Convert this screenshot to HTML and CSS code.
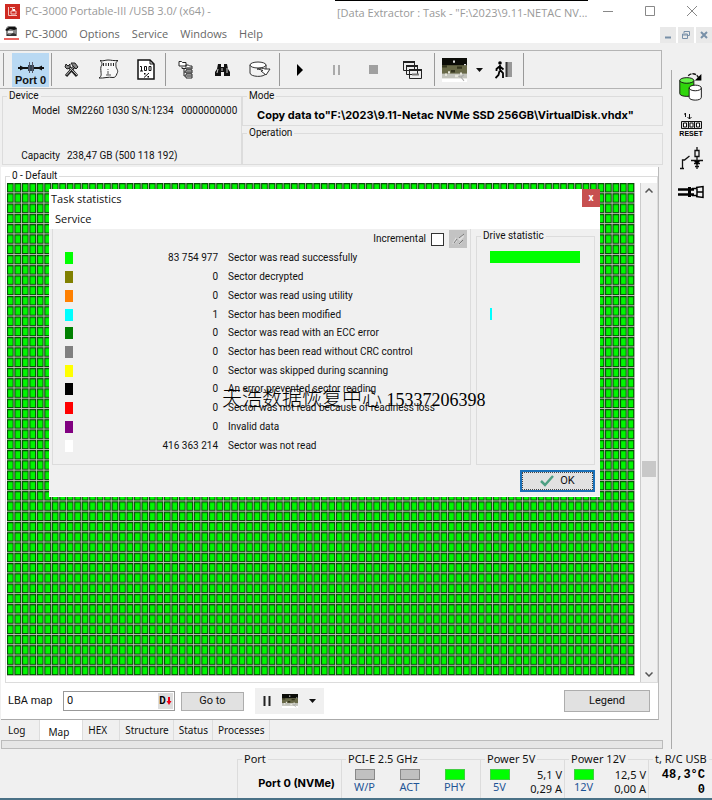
FILE: index.html
```html
<!DOCTYPE html>
<html lang="en">
<head>
<meta charset="utf-8">
<title>PC-3000 Portable-III</title>
<link rel="stylesheet" href="styles.css">
</head>
<body>
<svg class="defs" aria-hidden="true">
  <defs>
    <symbol id="photo" viewBox="0 0 25 20" preserveAspectRatio="none">
      <rect width="25" height="20" fill="#fff"/>
      <rect width="25" height="7" fill="#0b0c08"/>
      <rect y="6" width="25" height="8" fill="#686948"/>
      <rect y="13" width="25" height="4" fill="#c3c4bc"/>
      <path d="M0 6h5v2H0zM15 7h5v2h-5zM9 10h4v2H9z" fill="#35361f"/>
      <path d="M3 13h2v2H3zM6 11h2v2H6zM13 14h4v2h-4zM18 12h2v2h-2z" fill="#e6e6dc"/>
      <path d="M11 2h2v2h-2zM22 5h2v1h-2z" fill="#ddd"/>
      <path d="M16 15l3 1 3-2M19 16l3 3" stroke="#aaa" fill="none"/>
    </symbol>
  </defs>
</svg>

<header class="titlebar">
  <svg class="app-logo" viewBox="0 0 15 15" aria-hidden="true"><rect width="15" height="15" fill="#cf2a22"/><path d="M5 3.500h5M3.500 3v8.500H12M6 7h5v3H6zM7.500 4v3" stroke="#f6c5c0" fill="none"/><path d="M8 5h2v2H8z" fill="#fff"/></svg>
  <span class="title-main">PC-3000 Portable-III /USB 3.0/ (x64) -</span>
  <span class="title-task">[Data Extractor : Task - "F:\2023\9.11-NETAC NV...</span>
  <div class="win-buttons">
    <button aria-label="Minimize"><svg viewBox="0 0 10 10"><path d="M0 5.500h10"/></svg></button>
    <button aria-label="Maximize"><svg viewBox="0 0 10 10"><path d="M.5.5h9v9h-9z"/></svg></button>
    <button aria-label="Close"><svg viewBox="0 0 10 10"><path d="M0 0l10 10M10 0L0 10"/></svg></button>
  </div>
</header>

<nav class="menubar">
  <svg class="menu-logo" viewBox="0 0 15 14" aria-hidden="true"><path d="M2 2l2-2h7l2 2v8H2z" fill="#888"/><path d="M1 4l4-3h6l2 2-3 1-4-1-3 2z" fill="#111"/><path d="M3 8l3 1 3-2 3 1v2H3z" fill="#333"/><path d="M4 5h5v2H4z" fill="#eee"/><path d="M0 13h15" stroke="#e2302a" stroke-width="1.500"/></svg>
  <button>PC-3000</button><button>Options</button><button>Service</button><button>Windows</button><button>Help</button>
  <div class="mdi-buttons">
    <button aria-label="Minimize document"><svg viewBox="0 0 10 10"><path d="M2 7.500h6"/></svg></button>
    <button aria-label="Restore document"><svg viewBox="0 0 10 10"><path d="M3 3V1.500h5.500v4H7M1.500 4h5v4.500h-5zM1.500 5h5" stroke-width="1"/></svg></button>
    <button aria-label="Close document"><svg viewBox="0 0 10 10"><path d="M2 2l6 6M8 2L2 8"/></svg></button>
  </div>
</nav>

<div class="workspace">
  <main class="main">
    <div class="toolbar">
      <i class="sep"></i>
      <button class="port" aria-label="Port 0"><svg viewBox="0 0 28 13" aria-hidden="true"><path d="M1 7h26" stroke="#111" stroke-width="2"/><path d="M3 4.500l5 2.500-5 2.500zM25 4.500L20 7l5 2.500z" fill="#111"/><path d="M11 4h6v6h-6z" fill="#345"/><path d="M12.500 1v11M15.500 1v11" stroke="#556" stroke-width="1"/></svg><span>Port 0</span></button>
      <i class="sep"></i>
      <button aria-label="Tools"><svg width="15" height="15" viewBox="0 0 15 15"><path d="M2 14l8-9M5 5l8 9" stroke="#222" stroke-width="3"/><path d="M2.500 13l7-8M5 5l8 8" stroke="#bbb" stroke-width="1"/><path d="M7 1l4 0 3 4-2 2-3-3zM1 5l1-3 2 2 2-2 0 4-3 1z" fill="#888" stroke="#222"/></svg></button>
      <button aria-label="Script"><svg width="21" height="21" viewBox="0 0 21 21"><path d="M2 1.500c3 1 5-.5 8-.5s6 1 10 .5c-3 2-2 4-2 6s3 4 1 7c-1 3-2 4-4 4-5-1-9 1-14 .5 3-2 2-4 2-6s-1-5 1-7C4 4 4 3 2 1.500z" fill="#f8f8f8" stroke="#222"/><path d="M5.500 4v3M8 4v3M10.500 4v3M13 4v3M15.500 4v3" stroke="#222"/><path d="M10 10v1M10 12v4M8 16h5" stroke="#888" stroke-width="1.500"/></svg></button>
      <button aria-label="Progress report"><svg width="18" height="21" viewBox="0 0 18 21"><path d="M1 1h12l4 4v15H1z" fill="#fff" stroke="#111" stroke-width="1.500"/><path d="M13 1v4h4" stroke="#111" fill="none"/><path d="M3 7.500h1.500V12M3 12h3M7.500 7.500h2v4h-2zM12 7.500h2v4h-2z" stroke="#111" fill="none"/><path d="M7 14h1.500v1.500H7zM10.500 17H12v1.500h-1.500z"/><path d="M12 14l-5 4.500" stroke="#111"/></svg></button>
      <i class="sep"></i>
      <button aria-label="Structure"><svg width="15" height="19" viewBox="0 0 15 19"><path d="M1 1.500h2.500l1 1H8v3.500H1zM8 5h2.500l1 1H14v3H8zM8 10h6v3H8zM8 14h6v4H8z" fill="#fff" stroke="#222"/><path d="M4 7v1.500h4M6 8v4h2M6 12v4h2" stroke="#222" fill="none"/><path d="M9 8h5M9 12h5M9 16h5" stroke="#555" stroke-width="1.500"/></svg></button>
      <button aria-label="Find"><svg width="15" height="13" viewBox="0 0 15 13"><path d="M3 1h3v3h3V1h3l1 5 2 3v4H9V9H6v4H0V9l2-3z" fill="#111"/><path d="M3 6l-1 4M7 5v3M12 5v5" stroke="#ccc"/></svg></button>
      <button aria-label="Disk"><svg width="22" height="17" viewBox="0 0 22 17"><path d="M1 4v8c0 4 15 5 16 0V4" fill="#f3f3f3" stroke="#333"/><ellipse cx="9" cy="4" rx="8" ry="3" fill="#fff" stroke="#333"/><path d="M8 8c3-1 6-1 8 0l5 0-4 6-5-4 2-.5c-2-1-4-1-6-1.500z" fill="#fff" stroke="#333"/></svg></button>
      <i class="sep"></i>
      <button aria-label="Start"><svg width="6" height="12" viewBox="0 0 6 12"><path d="M0 0l6 6-6 6z" fill="#000"/></svg></button>
      <button aria-label="Pause"><svg width="7" height="10" viewBox="0 0 7 10"><path d="M1 0v10M6 0v10" stroke="#aaa" stroke-width="2"/></svg></button>
      <button aria-label="Stop"><svg width="9" height="9" viewBox="0 0 9 9"><path d="M0 0h9v9H0z" fill="#a0a0a0"/></svg></button>
      <button class="windows" aria-label="Windows"><svg width="19" height="20" viewBox="0 0 19 20"><g fill="#eee" stroke="#222"><path d="M.5 1.500h11v9H.5zM3.500 5.500h11v9h-11zM6.500 9.500h12v9h-12z"/></g><path d="M0 2h12M3 6h12M6 10h13" stroke="#222" stroke-width="2"/><path d="M9 14.500h7" stroke="#777" stroke-width="2"/></svg></button>
      <i class="sep"></i>
      <button class="photo" aria-label="Map view"><svg width="25" height="24"><use href="#photo"/></svg></button>
      <button class="drop" aria-label="Map view options"><svg width="7" height="4" viewBox="0 0 7 4"><path d="M0 0h7L3.500 4z" fill="#111"/></svg></button>
      <button aria-label="Exit"><svg width="18" height="18" viewBox="0 0 18 18"><path d="M11 1h6v15h-6z" fill="#999"/><path d="M11.500 1v15" stroke="#333" stroke-width="2"/><circle cx="5" cy="2" r="1.800"/><path d="M5 4v5l3 3v5M4.500 10l-1 4-3 3M5 5L1.500 8v2M5.500 6l3 2.500" stroke="#000" stroke-width="1.800" fill="none"/></svg></button>
      <i class="sep"></i>
    </div>

    <section class="info">
      <fieldset class="device">
        <legend>Device</legend>
        <dl><dt>Model</dt><dd>SM2260 1030 S/N:1234 &nbsp; 0000000000</dd><dt>Capacity</dt><dd>238,47 GB (500 118 192)</dd></dl>
      </fieldset>
      <div class="state">
        <fieldset class="mode"><legend>Mode</legend><strong>Copy data to"F:\2023\9.11-Netac NVMe SSD 256GB\VirtualDisk.vhdx"</strong></fieldset>
        <fieldset class="operation"><legend>Operation</legend></fieldset>
      </div>
    </section>

    <section class="panel">
      <fieldset class="map">
        <legend>0 - Default</legend>
        <div class="map-row">
          <svg class="cells" viewBox="0 0 840 480" preserveAspectRatio="none" role="img" aria-label="Sector map">
            <defs><pattern id="cell" width="10" height="10" patternUnits="userSpaceOnUse"><rect width="10" height="10" fill="#d5c8cc"/><rect width="9" height="9.200" fill="#064d06"/><rect x="1.400" y="1.200" width="6.200" height="7" fill="#00f700"/></pattern></defs>
            <rect width="840" height="480" fill="url(#cell)"/>
          </svg>
          <div class="scrollbar" aria-hidden="true">
            <svg viewBox="0 0 8 5"><path d="M0.500 4.500L4 1l3.500 3.500"/></svg>
            <i class="thumb"></i>
            <svg viewBox="0 0 8 5"><path d="M0.500.5L4 4 7.500.5"/></svg>
          </div>
        </div>
      </fieldset>
      <div class="controls">
        <label for="lba">LBA map</label>
        <div class="lba"><input id="lba" value="0"><button aria-label="Decimal"><b>D</b><svg viewBox="0 0 5 8"><path d="M1.500 0h2v4H5L2.500 8 0 4h1.500z" fill="#f00018"/></svg></button></div>
        <button class="push goto">Go to</button>
        <div class="mini">
          <button aria-label="Pause map"><svg width="8" height="10" viewBox="0 0 8 10"><path d="M1.500 0v10M6.500 0v10" stroke="#222" stroke-width="2"/></svg></button>
          <button aria-label="Map mode"><svg width="16" height="14"><use href="#photo"/></svg></button>
          <button aria-label="Map mode options"><svg width="7" height="4" viewBox="0 0 7 4"><path d="M0 0h7L3.500 4z" fill="#111"/></svg></button>
        </div>
        <button class="push legend">Legend</button>
      </div>
    </section>

    <div class="tabs" role="tablist">
      <button role="tab">Log</button><button role="tab" class="active" aria-selected="true">Map</button><button role="tab">HEX</button><button role="tab">Structure</button><button role="tab">Status</button><button role="tab">Processes</button>
    </div>
    <div class="strip"></div>

    <section class="dialog" role="dialog" aria-label="Task statistics">
      <header><h1>Task statistics</h1><button aria-label="Close dialog">x</button></header>
      <nav><button>Service</button></nav>
      <div class="dialog-body">
        <div class="stats">
          <div class="incremental"><label for="inc">Incremental</label><input id="inc" type="checkbox"><button aria-label="Reset counters"><svg viewBox="0 0 18 18"><path d="M3 14l4-7 1 5zM9 9l5-5 1 3-4 4zM9 15l2-3 2 1z" fill="#ddd"/><path d="M5 13l3-4M10 8l5-4M10 14l4-4" stroke="#777"/></svg></button></div>
          <table>
            <tr><td><i class="c-read"></i></td><td>83 754 977</td><td>Sector was read successfully</td></tr>
            <tr><td><i class="c-decrypted"></i></td><td>0</td><td>Sector decrypted</td></tr>
            <tr><td><i class="c-utility"></i></td><td>0</td><td>Sector was read using utility</td></tr>
            <tr><td><i class="c-modified"></i></td><td>1</td><td>Sector has been modified</td></tr>
            <tr><td><i class="c-ecc"></i></td><td>0</td><td>Sector was read with an ECC error</td></tr>
            <tr><td><i class="c-crc"></i></td><td>0</td><td>Sector has been read without CRC control</td></tr>
            <tr><td><i class="c-skipped"></i></td><td>0</td><td>Sector was skipped during scanning</td></tr>
            <tr><td><i class="c-error"></i></td><td>0</td><td>An error prevented sector reading</td></tr>
            <tr><td><i class="c-ready"></i></td><td>0</td><td>Sector was not read because of readiness loss</td></tr>
            <tr><td><i class="c-invalid"></i></td><td>0</td><td>Invalid data</td></tr>
            <tr><td><i class="c-unread"></i></td><td>416 363 214</td><td>Sector was not read</td></tr>
          </table>
        </div>
        <fieldset class="drive">
          <legend>Drive statistic</legend>
          <div class="bars"><i class="c-read" style="width:100%"></i><i></i><i></i><i class="c-modified" style="width:2%"></i></div>
        </fieldset>
      </div>
      <footer><button class="ok"><svg viewBox="0 0 14 12"><path d="M1 6l4 4 8-9" fill="none" stroke="#4d9f83" stroke-width="2.500"/></svg>OK</button></footer>
      <p class="watermark"><span lang="zh">天浩数据恢复中心</span> 15337206398</p>
    </section>
  </main>

  <aside class="side">
    <button aria-label="Swap power"><svg width="27" height="30" viewBox="0 0 27 32"><path d="M1 9v14c0 4 15 4 15 0V9" fill="#2fd50b" stroke="#111"/><ellipse cx="8.500" cy="9" rx="7.500" ry="3" fill="#67f44a" stroke="#111"/><path d="M11 17v10c0 4 13 4 13 0V17" fill="#fff" stroke="#111"/><ellipse cx="17.500" cy="17" rx="6.500" ry="3" fill="#fff" stroke="#111"/><path d="M10 4c4-4 9-2 11 2" fill="none" stroke="#111" stroke-dasharray="4 1" stroke-width="1.500"/><path d="M24 2v7h-7z"/></svg></button>
    <button class="reset" aria-label="Reset"><svg width="21" height="18" viewBox="0 0 21 18"><path d="M4.500 1v4M3 2h1M8.500 2v5M6.500 5l2 2 2-2" fill="none" stroke="#111"/><path d="M.5 9.500h20v7H.5z" fill="#ddd" stroke="#111"/><path d="M2.500 11h3v4h-3zM9 11h3v4H9zM15.500 11h3v4h-3z" fill="#fff" stroke="#111"/><path d="M7.500 10v6M13.500 10v6" stroke="#111"/></svg><span>RESET</span></button>
    <button aria-label="Power switch"><svg width="23" height="23" viewBox="0 0 23 23"><path d="M0 21.500h4M2.500 21v-8h2l5-4M17 0v3M15 3.500h4v6h-4zM17 10v12M11 13.500h12M14 16.500h6M15 19.500h4" fill="none" stroke="#111" stroke-width="1.300"/><path d="M14 14h6l-3 4z"/></svg></button>
    <button aria-label="Connector"><svg width="26" height="14" viewBox="0 0 26 14"><path d="M0 4.500h16M0 9.500h16" stroke="#000" stroke-width="2.500"/><path d="M10 2h3v10h-3z"/><path d="M14 3.500h5v7h-5M18 2.500l7-1v11l-7-1M19 7h6" fill="none" stroke="#000" stroke-width="1.500"/></svg></button>
  </aside>
</div>

<footer class="status">
  <fieldset class="s-port"><legend>Port</legend><strong>Port 0 (NVMe)</strong></fieldset>
  <fieldset class="s-pci"><legend>PCI-E 2.5 GHz</legend><div class="led"><i></i>W/P</div><div class="led"><i></i>ACT</div><div class="led on"><i></i>PHY</div></fieldset>
  <fieldset class="s-power"><legend>Power 5V</legend><div class="led on"><i></i>5V</div><div class="values">5,1 V<br>0,29 A</div></fieldset>
  <fieldset class="s-power"><legend>Power 12V</legend><div class="led on"><i></i>12V</div><div class="values">12,5 V<br>0,00 A</div></fieldset>
  <fieldset class="s-temp"><legend>t, R/C USB</legend><div>48,3°C<br>0</div></fieldset>
</footer>
</body>
</html>
```
FILE: styles.css
```css
* { box-sizing: border-box; }
body {
  margin: 0;
  min-height: 100vh;
  display: flex;
  flex-direction: column;
  background: #f0f0f0;
  color: #111;
  font: 10px/14px Roboto, "Liberation Sans", sans-serif;
  border-bottom: 2px solid #4a7186;
}
button { border: 0; padding: 0; margin: 0; background: none; font: inherit; color: inherit; }
button svg { display: block; }
fieldset { min-width: 0; margin: 0; padding: 0; border: 1px solid #dcdcdc; }
legend { padding: 0 2px; margin-left: 4px; white-space: nowrap; }
i { display: block; }
.defs { position: absolute; width: 0; height: 0; }

/* title and menu */
.titlebar { display: flex; align-items: center; height: 22px; background: #fff; padding-left: 5px; font: 11px/16px "Open Sans", sans-serif; color: #999; white-space: nowrap; }
.app-logo { width: 15px; height: 15px; flex: none; margin-right: 5px; }
.title-main { flex: 1; }
.title-task { height: 22px; line-height: 24px; border-top: 1px solid #000; padding-left: 2px; width: 253px; }
.win-buttons { display: flex; width: 124px; justify-content: space-between; padding: 0 15px; }
.win-buttons svg { width: 10px; height: 10px; fill: none; stroke: #888; }
.menubar { display: flex; align-items: center; height: 21px; background: #fff; padding-left: 4px; gap: 12px; font: 11px/16px "Open Sans", sans-serif; color: #666; }
.menubar > button { padding-top: 3px; }
.menu-logo { width: 15px; height: 14px; margin-right: -6px; }
.mdi-buttons { display: flex; gap: 2px; margin-left: auto; align-self: stretch; padding-top: 5px; }
.mdi-buttons button { width: 16px; background: #e9e9e9; display: grid; place-items: center; }
.mdi-buttons svg { width: 10px; height: 10px; fill: none; stroke: #7890a8; stroke-width: 2; }

.workspace { flex: 1; display: flex; }
.main { position: relative; flex: 1; min-width: 0; display: flex; flex-direction: column; padding-top: 7px; }

/* toolbar */
.toolbar { display: flex; align-items: center; height: 39px; border: 1px solid #b4b4b4; border-left: 0; padding-left: 2px; margin-right: 1px; }
.toolbar button { width: 37px; display: flex; justify-content: center; align-items: center; flex: none; }
.toolbar .port { height: 34px; flex-direction: column; justify-content: flex-end; background: #b9d9f3; margin-left: 7px; margin-right: 1px; font: bold 11px/13px "Liberation Sans", sans-serif; color: #111; }
.port svg { width: 28px; height: 13px; }
.toolbar .windows { width: 41px; }
.toolbar .drop { width: 12px; }
.sep { width: 1px; height: 33px; background: #999; margin: 0 1px; flex: none; }

/* device and mode */
.info { display: flex; padding-left: 2px; height: 76px; }
.device { width: 240px; flex: none; }
dl { display: grid; grid-template-columns: 52px 1fr; column-gap: 7px; row-gap: 31px; margin: 1px 0 0 5px; }
dt { text-align: right; }
dd { margin: 0; white-space: nowrap; }
.state { flex: 1; min-width: 0; display: flex; flex-direction: column; }
.mode { height: 37px; }
.mode strong { display: block; padding-left: 14px; margin-top: 4px; font: bold 11px/16px Inter, sans-serif; color: #000; white-space: nowrap; }
.operation { flex: 1; }

/* sector map */
.panel { flex: 1; display: flex; flex-direction: column; background: #fff; margin: 2px 4px 0 1px; border-right: 1px solid #bbb; border-bottom: 1px solid #aaa; }
.map { flex: 1; display: flex; flex-direction: column; margin: 2px 0 0 4px; }
.map legend { margin-left: 4px; }
.map-row { height: 100%; display: flex; }
.cells { display: block; flex: 1; min-width: 0; margin: 0 5px 6px 1px; height: auto; }
.scrollbar { width: 17px; background: #f0f0f0; border-left: 1px solid #ccc; display: flex; flex-direction: column; align-items: center; padding: 5px 0; }
.scrollbar svg { width: 8px; height: 5px; fill: none; stroke: #555; stroke-width: 1.500; }
.thumb { width: 14px; height: 16px; background: #c8c8c8; margin-top: 268px; margin-bottom: auto; }
.controls { display: flex; align-items: center; height: 36px; padding: 0 8px 0 7px; }
.controls label { width: 55px; font-size: 11px; }
.lba { display: flex; width: 112px; height: 20px; border: 1px solid #999; background: #fff; padding: 1px; }
.lba input { flex: 1; min-width: 0; border: 0; padding: 0 2px; font: inherit; font-size: 11px; color: inherit; background: none; }
.lba button { display: flex; align-items: center; justify-content: center; width: 15px; background: #ddd; color: #000; }
.lba svg { width: 6px; height: 8px; }
.push { border: 1px solid #adadad; background: #e1e1e1; font-size: 11px; }
.goto { width: 63px; height: 19px; margin: 0 11px 0 6px; }
.mini { display: flex; align-items: center; justify-content: space-between; width: 69px; height: 26px; background: #f0f0f0; padding: 0 8px; }
.legend { width: 86px; height: 22px; margin-left: auto; }

.tabs { display: flex; height: 20px; padding-left: 3px; font: 10px/20px "Noto Sans", sans-serif; }
.tabs button { padding: 0 4px 0 5px; border-right: 1px solid #ddd; }
.tabs button:first-child { padding-right: 14px; }
.tabs button:nth-child(3) { padding-right: 12px; }
.tabs .active { background: #fff; padding: 2px 13px 0 8px; }
.strip { height: 9px; border: 1px solid #bbb; background: #e6e6e6; margin-left: 1px; }

/* statistics window */
.dialog { position: absolute; left: 49px; top: 146px; width: 551px; background: #f0f0f0; border-bottom: 1px solid #fff; }
.dialog header { display: flex; justify-content: space-between; align-items: flex-start; background: #fff; height: 20px; padding-left: 2px; }
.dialog h1 { margin: 0; font: 11px/19px "Open Sans", sans-serif; }
.dialog header button { width: 18px; height: 18px; background: #c75050; color: #fff; font-weight: bold; }
.dialog nav { background: #fff; height: 20px; padding-left: 6px; font: 11px/20px "Open Sans", sans-serif; }
.dialog-body { display: flex; gap: 5px; height: 236px; padding: 0 5px 0 3px; }
.stats { flex: 1; border: 1px solid #dcdcdc; border-top: 0; }
.incremental { display: flex; align-items: center; justify-content: flex-end; height: 20px; gap: 5px; padding-right: 3px; }
.incremental input { appearance: none; width: 13px; height: 13px; margin: 0; border: 1px solid #333; background: #fff; }
.incremental button, .incremental svg { width: 18px; height: 18px; background: #c3c3c3; }
table { border-collapse: collapse; height: 206px; }
td { padding: 0; white-space: nowrap; }
td:first-child { width: 20px; padding-left: 12px; }
td:first-child i { width: 8px; height: 12px; }
td:nth-child(2) { width: 145px; text-align: right; }
td:nth-child(3) { padding-left: 10px; }
.drive { width: 119px; margin-bottom: 0; }
.bars { display: grid; grid-template-rows: repeat(11, 1fr); align-items: center; height: 206px; margin: 5px 14px 0 13px; }
.bars i { height: 12px; }
.c-read { background: #00ff00; }
.c-decrypted { background: #808000; }
.c-utility { background: #ff8000; }
.c-modified { background: #00ffff; }
.c-ecc { background: #008000; }
.c-crc { background: #808080; }
.c-skipped { background: #ffff00; }
.c-error { background: #000; }
.c-ready { background: #ff0000; }
.c-invalid { background: #800080; }
.c-unread { background: #fff; }
.dialog footer { display: flex; justify-content: flex-end; padding: 5px 5px 4px; }
.ok { display: flex; align-items: center; justify-content: center; gap: 6px; width: 75px; height: 22px; border: 2px solid #1a70b8; background: #e1e1e1; outline: 1px dotted #444; outline-offset: -3px; font-size: 11px; }
.ok svg { width: 14px; height: 12px; }
.watermark { position: absolute; left: 173px; top: 196px; margin: 0; font: 18px/26px "Liberation Serif", serif; color: #000; white-space: nowrap; }
.watermark span { font-family: "Noto Sans CJK SC", sans-serif; font-size: 20px; font-weight: 300; }

/* side buttons */
.side { width: 49px; display: flex; flex-direction: column; align-items: center; margin-top: 27px; padding: 2px 0 0 7px; gap: 10px; background: linear-gradient(#aaa, #aaa) 8px 0 / 1px 100% no-repeat; }
.reset span { display: block; font: bold 7px/7px "Liberation Sans", sans-serif; color: #000; }
.side button { display: flex; flex-direction: column; align-items: center; }
.side button:last-child { margin-top: 5px; }

/* status bar */
.status { display: flex; height: 49px; padding: 3px 0 0 237px; font: 11px/14px "Noto Sans", sans-serif; }
.status fieldset { height: 46px; display: flex; border-bottom: 0; border-right: 0; }
.s-port { width: 104px; }
.s-port strong { margin: 10px 6px 0 auto; font: bold 11px/14px Inter, sans-serif; color: #000; white-space: nowrap; }
.s-pci { width: 139px; }
.s-power { width: 84px; }
.s-temp { flex: 1; }
.s-temp div { margin-left: auto; text-align: right; padding: 2px 7px 0 0; font: bold 12px/15px "Liberation Mono", monospace; color: #000; }
.led { width: 45px; text-align: center; color: #1f5596; padding-top: 3px; }
.led i { width: 20px; height: 11px; margin: 0 auto; background: #c0c0c0; border: 1px solid #888; }
.led.on i { background: #00ff00; border-color: #4c4; }
.s-power .led { width: 37px; }
.values { flex: 1; text-align: right; padding: 2px 2px 0 0; white-space: nowrap; }
```
